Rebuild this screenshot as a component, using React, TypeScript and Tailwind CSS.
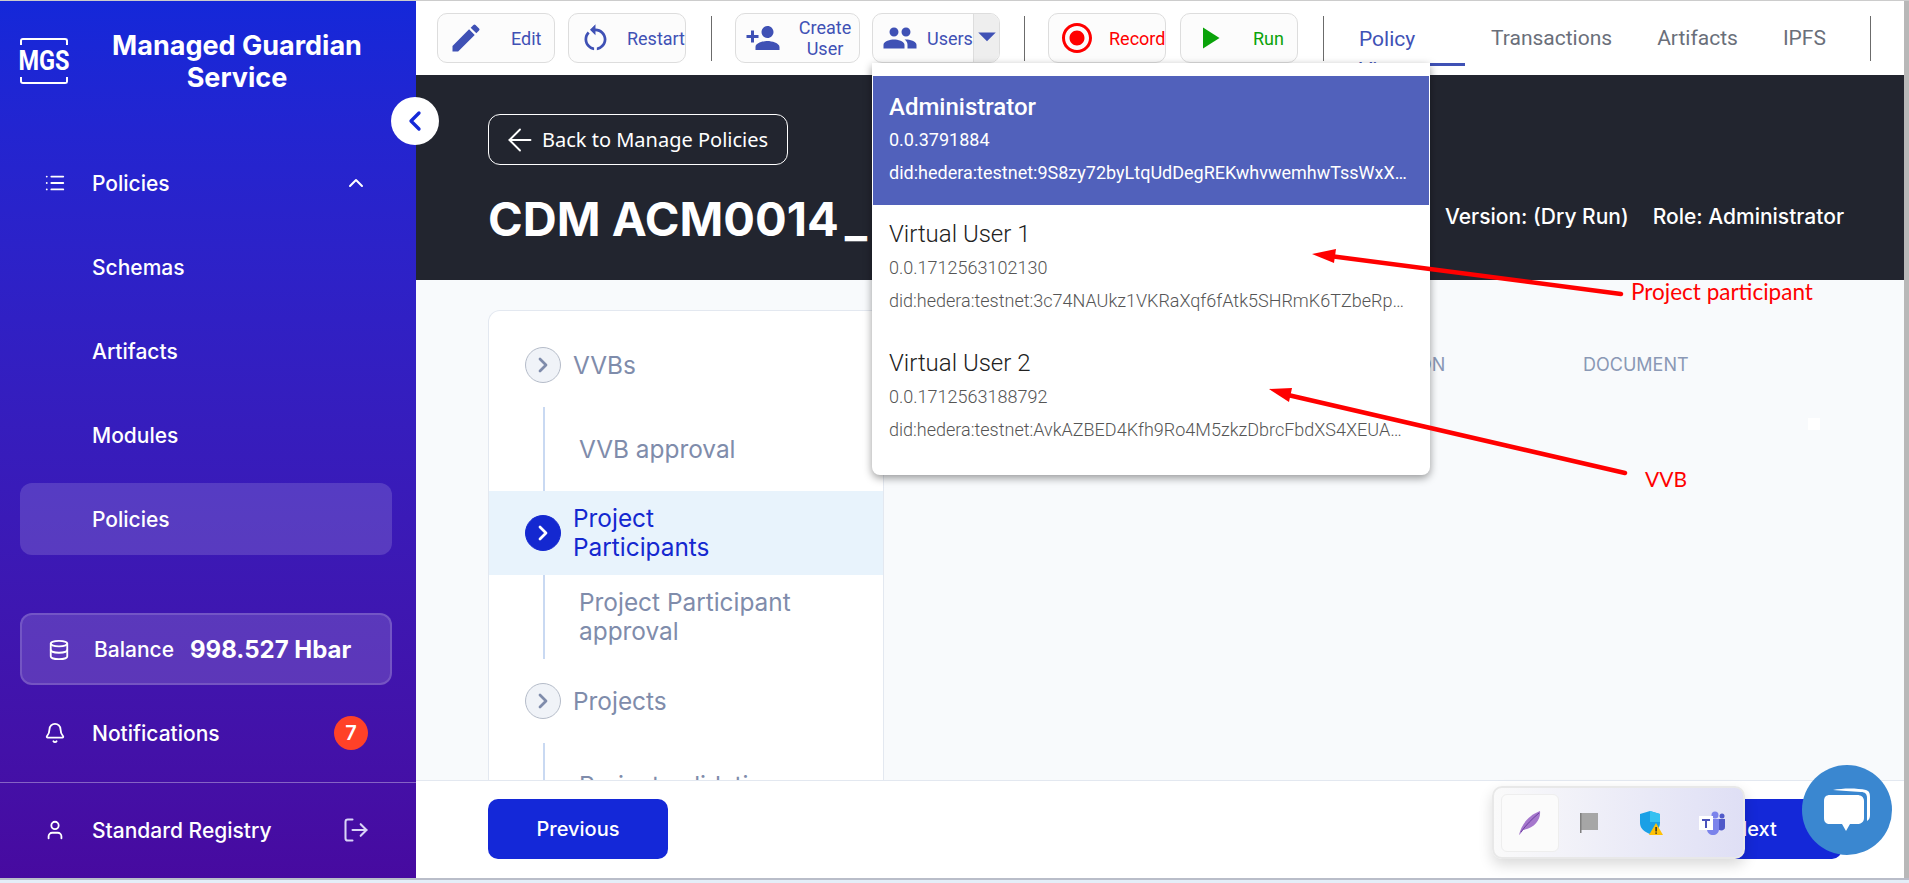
import React from 'react';
import { ArrowLeft, Bell, ChevronLeft, ChevronRight, ChevronUp, Database, List, LogOut, User } from 'lucide-react';
import { MdArrowDropDown, MdEdit, MdPeople, MdPersonAdd, MdPlayArrow, MdRadioButtonChecked, MdRestartAlt } from 'react-icons/md';

const navItems = ['Schemas', 'Artifacts', 'Modules'];

const users = [
  { name: 'Virtual User 1', account: '0.0.1712563102130', did: 'did:hedera:testnet:3c74NAUkz1VKRaXqf6fAtk5SHRmK6TZbeRpQm1' },
  { name: 'Virtual User 2', account: '0.0.1712563188792', did: 'did:hedera:testnet:AvkAZBED4Kfh9Ro4M5zkzDbrcFbdXS4XEUAmQ2' },
];

function ToolButton({ className, children }: { className: string; children: React.ReactNode }) {
  return (
    <div className={`h-[50px] flex items-center shrink-0 rounded-[10px] border border-[#dddddd] bg-[#fcfcfc] overflow-hidden ${className}`}>
      {children}
    </div>
  );
}

function Divider({ className }: { className: string }) {
  return <div className={`w-px h-[45px] bg-[#6b6b6b] shrink-0 ${className}`} />;
}

function StepHead({ label, active }: { label: React.ReactNode; active?: boolean }) {
  return (
    <div className={`h-[84px] flex items-center pl-9 text-[24.4px] leading-[29px] ${active ? 'bg-[#e8f3fc] text-[#1428d0]' : 'text-[#7f8cab]'}`}>
      <div className={`w-9 h-9 rounded-full flex items-center justify-center shrink-0 border ${active ? 'bg-[#1428d0] border-[#1428d0] text-white' : 'bg-[#f0f3f8] border-[#b5bcc9] text-[#7f8cab]'}`}>
        <ChevronRight className="w-6 h-6" strokeWidth={2.75} />
      </div>
      <div className="ml-3">{label}</div>
    </div>
  );
}

function StepBody({ label }: { label: React.ReactNode }) {
  return (
    <div className="h-[84px] ml-[54px] border-l-2 border-[#c9d9f2] pl-[34px] flex items-center text-[24.4px] leading-[29px] text-[#7f8cab]">
      <div>{label}</div>
    </div>
  );
}

export default function App() {
  return (
    <div className="relative w-[1909px] h-[883px] overflow-hidden flex flex-col bg-white font-['Inter',sans-serif]">
      <div className="h-px bg-[#cccccc]" />

      <div className="h-[877px] flex">
        {/* sidebar */}
        <aside className="w-[416px] shrink-0 flex flex-col text-white bg-gradient-to-b from-[#1428d9] to-[#470aa0]">
          <div className="h-[147px] flex pl-5 pt-[37px]">
            <div className="relative w-12 h-[46px] rounded-[3px] shrink-0">
              <div className="absolute left-0 right-0 top-0 h-[7px] rounded-t-[3px] border-2 border-b-0 border-white" />
              <div className="absolute left-0 right-0 bottom-0 h-[7px] rounded-b-[3px] border-2 border-t-0 border-white" />
              <div className="h-full flex items-center justify-center font-['Roboto',sans-serif] font-bold text-[28px] scale-x-[.84]">MGS</div>
            </div>
            <div className="w-[298px] ml-5 text-center font-bold text-[27px] leading-[32px] -mt-2">
              Managed Guardian Service
            </div>
          </div>

          <div className="flex flex-col gap-3 pl-5 pr-6 text-[21px] font-medium">
            <div className="h-[72px] flex items-center pl-6">
              <List className="w-[22px] h-[22px]" strokeWidth={2} />
              <span className="ml-[26px] flex-1">Policies</span>
              <ChevronUp className="w-6 h-6 mr-6" strokeWidth={2} />
            </div>
            {navItems.map((item) => (
              <div key={item} className="h-[72px] flex items-center pl-[72px]">{item}</div>
            ))}
            <div className="h-[72px] flex items-center pl-[72px] rounded-xl bg-white/15">Policies</div>
          </div>

          <div className="mt-[58px] ml-5 mr-6 h-[72px] rounded-xl bg-white/15 border-2 border-white/15 flex items-center pl-[26px] pt-px text-[21px] font-medium">
            <Database className="w-[22px] h-[22px]" strokeWidth={2} />
            <span className="ml-[24px]">Balance</span>
            <span className="ml-4 text-[24px] font-bold">998.527 Hbar</span>
          </div>

          <div className="mt-3 ml-5 mr-6 h-[72px] flex items-center pl-6 pt-px text-[21px] font-medium">
            <Bell className="w-[22px] h-[22px]" strokeWidth={2} />
            <span className="ml-[26px] flex-1">Notifications</span>
            <span className="w-[34px] h-[34px] rounded-full bg-[#ff4128] flex items-center justify-center mr-6 font-semibold text-[20px]">7</span>
          </div>

          <div className="mt-[13px] h-px bg-white/35" />

          <div className="h-[96px] ml-5 mr-6 flex items-center pl-6 text-[21px] font-medium">
            <User className="w-[22px] h-[22px]" strokeWidth={2} />
            <span className="ml-[26px] flex-1">Standard Registry</span>
            <LogOut className="w-[28px] h-[28px] mr-[22px] text-[#d9d4f7]" strokeWidth={1.75} />
          </div>
        </aside>

        <main className="relative flex-1 flex flex-col min-w-0">
          {/* toolbar */}
          <div className="h-[74px] shrink-0 flex items-center pl-[21px] bg-white font-['Roboto',sans-serif] text-[18px] text-[#3f51b5]">
            <ToolButton className="w-[118px] pl-[10px]">
              <MdEdit size={36} />
              <span className="ml-[27px]">Edit</span>
            </ToolButton>
            <ToolButton className="w-[118px] ml-[13px] pl-[10px]">
              <MdRestartAlt size={36} />
              <span className="ml-[15px]">Restart</span>
            </ToolButton>
            <Divider className="ml-[25px]" />
            <ToolButton className="w-[125px] ml-[23px] pl-[9px]">
              <MdPersonAdd size={36} className="shrink-0" />
              <span className="ml-[14px] w-[60px] text-center leading-[21px]">Create User</span>
            </ToolButton>
            <ToolButton className="w-[128px] ml-3 pl-[9px]">
              <MdPeople size={36} className="shrink-0" />
              <span className="ml-[9px] flex-1">Users</span>
              <div className="w-[28px] h-full bg-[#eeeeee] border-l border-[#dddddd] flex items-center justify-center">
                <MdArrowDropDown size={42} className="shrink-0 -mt-1" />
              </div>
            </ToolButton>
            <Divider className="ml-6" />
            <ToolButton className="w-[118px] ml-[23px] pl-[10px] text-[#ff0000]">
              <MdRadioButtonChecked size={36} className="shrink-0" />
              <span className="ml-[14px]">Record</span>
            </ToolButton>
            <ToolButton className="w-[118px] ml-[14px] pl-[10px] text-[#0aa30a]">
              <MdPlayArrow size={36} className="shrink-0" />
              <span className="ml-[26px]">Run</span>
            </ToolButton>
            <Divider className="ml-[25px]" />
            <div className="self-start mt-[22px] ml-4 w-[125px] h-[43px] shrink-0 overflow-hidden border-b-[3px] border-[#3f51b5] pl-[19px] pt-px text-[21px] leading-[31px]">
              Policy
              <br />
              View
            </div>
            <div className="ml-[26px] pt-px text-[21px] text-[#6a6f7a] flex items-center">
              <span>Transactions</span>
              <span className="ml-[45px]">Artifacts</span>
              <span className="ml-[45px]">IPFS</span>
            </div>
            <Divider className="ml-[44px]" />
          </div>

          {/* policy header */}
          <div className="h-[205px] shrink-0 bg-[#22252f] text-white pl-[72px] pr-[60px] pt-[39px]">
            <div className="w-[300px] h-[51px] rounded-xl border border-white flex items-center pl-[19px] font-['Noto_Sans',sans-serif] text-[20px]">
              <ArrowLeft className="w-9 h-9 -mx-[6px]" strokeWidth={1.25} />
              <span className="ml-[10px]">Back to Manage Policies</span>
            </div>
            <div className="mt-[25px] flex items-center justify-between">
              <div className="text-[47px] leading-[58px] font-bold">
                CDM ACM0014<span className="ml-[6px]">_</span>
              </div>
              <div className="flex gap-6 text-[21px] font-medium -mt-[5px]">
                <span>Version: (Dry Run)</span>
                <span>Role: Administrator</span>
              </div>
            </div>
          </div>

          {/* steps + table */}
          <div className="flex-1 min-h-0 flex bg-[#f8fafc] pl-[72px] pt-[30px]">
            <div className="w-[396px] shrink-0 overflow-hidden bg-white border border-b-0 border-[#e3e8f0] rounded-tl-xl pt-3">
              <StepHead label="VVBs" />
              <StepBody label="VVB approval" />
              <StepHead
                active
                label={
                  <>
                    Project
                    <br />
                    Participants
                  </>
                }
              />
              <StepBody
                label={
                  <>
                    Project Participant
                    <br />
                    approval
                  </>
                }
              />
              <StepHead label="Projects" />
              <StepBody label="Project validation" />
            </div>
            <div className="flex-1 pt-[45px] text-[18px] leading-5 text-[#8a98b5]">
              <div className="flex pl-[459px]">
                <div className="w-[240px]">OPERATION</div>
                <div>DOCUMENT</div>
              </div>
              <div className="mt-[43px] ml-[924px] w-3 h-3 bg-white" />
            </div>
          </div>

          {/* footer */}
          <div className="h-[98px] shrink-0 border-t border-[#e3e8f0] bg-white flex items-center justify-between pl-[72px] pr-[62px] pb-px text-[20px] font-medium text-white">
            <div className="w-[180px] h-[60px] rounded-[10px] bg-[#1428d8] flex items-center justify-center">Previous</div>
            <div className="w-[175px] h-[60px] rounded-[10px] bg-[#1428d8] flex items-center justify-center">Next</div>
          </div>

          {/* open users menu */}
          <div className="absolute left-[456px] top-[62px] w-[558px] h-[412px] rounded-b-lg bg-white pt-[13px] px-px shadow-[0_3px_8px_rgba(0,0,0,0.4)] font-['Roboto',sans-serif]">
            <div className="h-[129px] bg-[#5161bb] text-white pl-4 pr-[16px] pt-4">
              <div className="text-[24px] leading-[30px] font-medium">Administrator</div>
              <div className="mt-[3px] text-[18px] leading-[30px]">0.0.3791884</div>
              <div className="mt-[3px] text-[18px] leading-[30px] truncate">did:hedera:testnet:9S8zy72byLtqUdDegREKwhvwemhwTssWxXaB3f</div>
            </div>
            {users.map((u) => (
              <div key={u.name} className="h-[129px] pl-4 pr-[16px] pt-[14px]">
                <div className="text-[24px] leading-[30px] text-[#212121] font-light">{u.name}</div>
                <div className="mt-[4px] text-[18px] leading-[30px] text-[#555555] font-light">{u.account}</div>
                <div className="mt-[3px] text-[18px] leading-[30px] text-[#555555] font-light truncate">{u.did}</div>
              </div>
            ))}
          </div>

          {/* sidebar collapse */}
          <div className="absolute -left-[25px] top-[96px] w-12 h-12 rounded-full bg-white flex items-center justify-center text-[#1428d8]">
            <ChevronLeft className="w-8 h-8" strokeWidth={2.5} />
          </div>
        </main>

        <div className="w-[5px] shrink-0 bg-[#b8b8b8]" />
      </div>

      <div className="h-[5px] border-t-2 border-[#b9bdc9] bg-[#e4eef8]" />

      {/* red annotations drawn over the screenshot */}
      <svg className="absolute inset-0 pointer-events-none" width="1909" height="883" viewBox="0 0 1909 883">
        <line x1="1330" y1="256" x2="1621" y2="294" stroke="#ff0000" strokeWidth="4.5" strokeLinecap="round" />
        <polygon points="1312,254 1336,249 1334,263" fill="#ff0000" />
        <line x1="1288" y1="395" x2="1625" y2="473" stroke="#ff0000" strokeWidth="4.5" strokeLinecap="round" />
        <polygon points="1269,389 1292,388 1289,402" fill="#ff0000" />
      </svg>
      <div className="absolute left-[1631px] top-[278px] text-[22.5px] leading-[28px] text-[#ff0000] font-['Lato',sans-serif]">Project participant</div>
      <div className="absolute left-[1645px] top-[465px] text-[21px] leading-[28px] text-[#ff0000] font-['Lato',sans-serif]">VVB</div>

      {/* tray flyout */}
      <div className="absolute left-[1492px] top-[786px] w-[253px] h-[73px] rounded-[10px] border-2 border-[#e8e8e8] bg-gradient-to-r from-[#fafafa] to-[#dfdff5] shadow-[0_6px_14px_rgba(0,0,0,0.15)] flex items-center pl-[7px]">
        <div className="w-[58px] h-[58px] rounded-md border border-[#eeeeee] bg-[#fbfbfb] flex items-center justify-center">
          <svg width="24" height="26" viewBox="0 0 24 26">
            <path d="M1 25C3 16 9 6 22 1C23 9 17 18 5 20C4 22 3 23 1 25Z" fill="#a577cc" />
            <path d="M3 22C8 15 14 9 21 3" stroke="#6b3fa0" strokeWidth="1" fill="none" />
          </svg>
        </div>
        <svg className="ml-[21px]" width="18" height="21" viewBox="0 0 18 21">
          <rect x="1" y="1" width="17" height="17" fill="#a6a6a6" />
          <rect x="0" y="1" width="1.5" height="20" fill="#7f7f7f" />
        </svg>
        <svg className="ml-[41px]" width="24" height="25" viewBox="0 0 24 25">
          <path d="M11 1L21 4V13C21 19 16 22 11 24C6 22 1 19 1 13V4Z" fill="#1aa0e6" />
          <path d="M11 1L21 4V12H11Z" fill="#35c1f1" />
          <path d="M17 13L24 25H10Z" fill="#ffc107" />
          <rect x="16.4" y="17" width="1.4" height="4.5" fill="#222222" />
          <rect x="16.4" y="22.4" width="1.4" height="1.4" fill="#222222" />
        </svg>
        <svg className="ml-[36px]" width="26" height="24" viewBox="0 0 26 24">
          <circle cx="16" cy="4" r="3.5" fill="#7b83eb" />
          <circle cx="23" cy="5" r="2.5" fill="#5059c9" />
          <path d="M20 8H26V16C26 19 23 20 20 19Z" fill="#5059c9" />
          <path d="M8 8H20V18C20 22 17 24 14 24C11 24 8 22 8 18Z" fill="#7b83eb" />
          <rect x="0" y="5" width="14" height="14" fill="#ffffff" />
          <path d="M3 8H11V10H8V17H6V10H3Z" fill="#4b53bc" />
        </svg>
      </div>

      {/* chat bubble */}
      <div className="absolute left-[1802px] top-[765px] w-[90px] h-[90px] rounded-full bg-[#3a87d0] flex items-center justify-center">
        <svg width="48" height="46" viewBox="0 0 48 46">
          <path d="M10 3C20 1 34 1 43 3C46 4 47 6 47 10V28C47 31 46 33 44 34L44 11C44 7 42 5 38 5C28 4 18 4 10 3Z" fill="#ffffff" />
          <path d="M7 8H34C38 8 41 10 41 14V31C41 35 38 37 34 37H27L23 44L19 37H7C3 37 1 35 1 31V14C1 10 3 8 7 8Z" fill="#ffffff" />
        </svg>
      </div>
    </div>
  );
}
